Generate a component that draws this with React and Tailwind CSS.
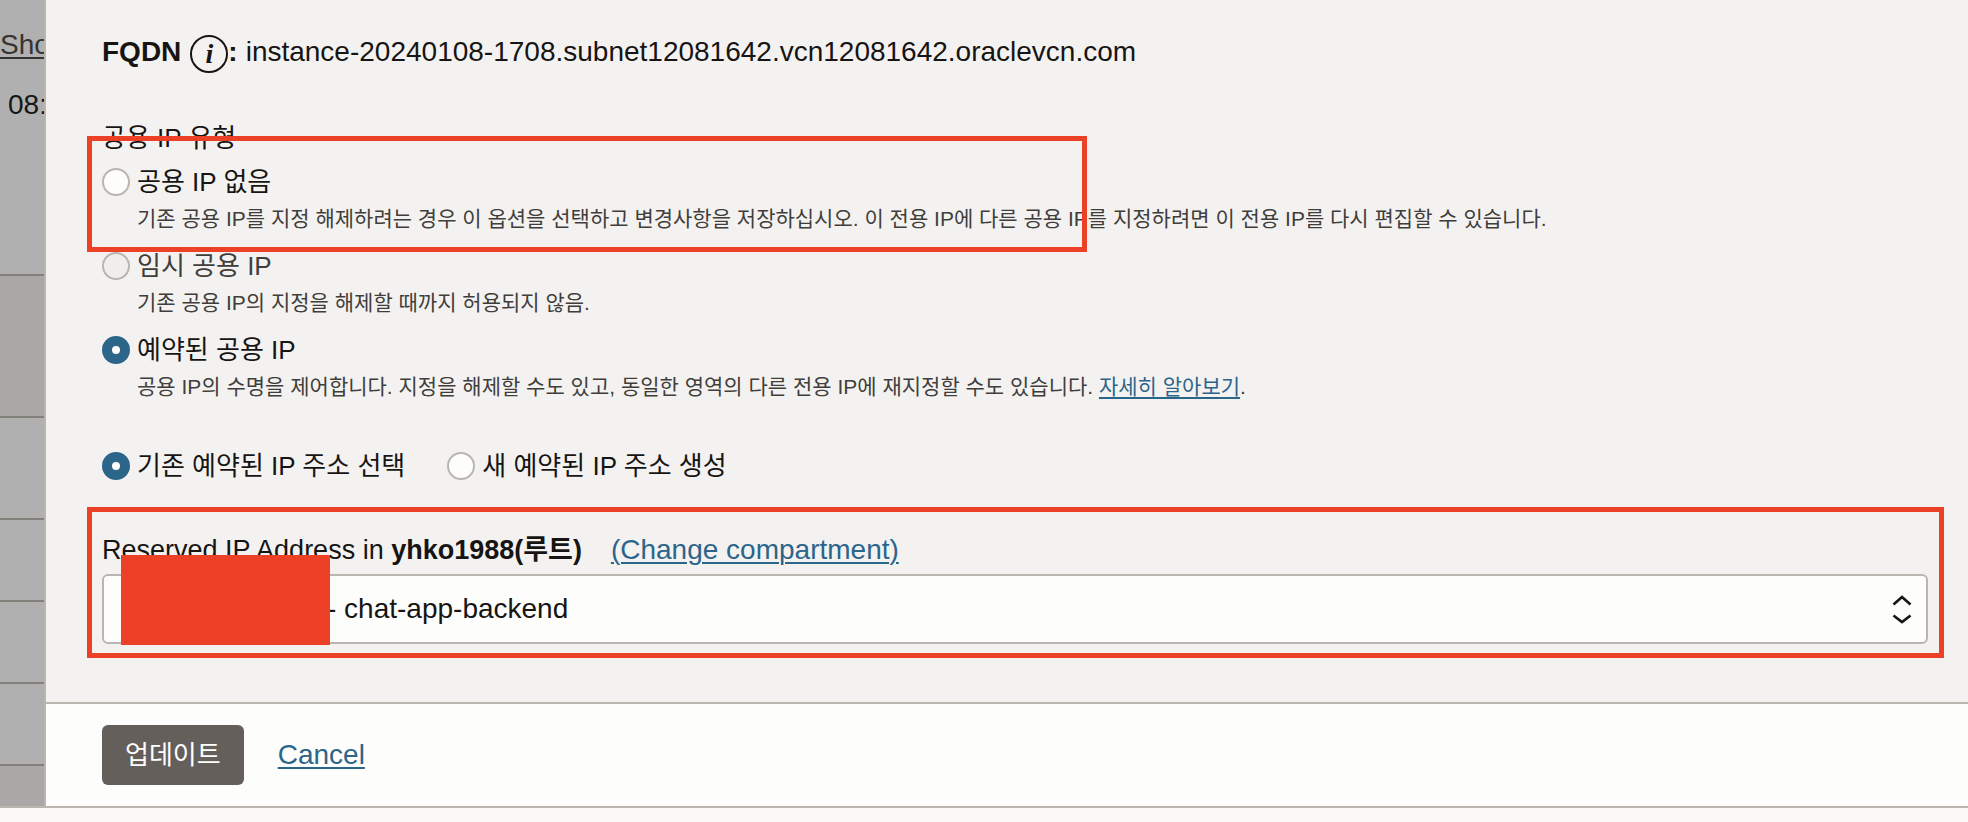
const OPTIONS = [
  {
    id: 'none',
    label: '공용 IP 없음',
    hint: '기존 공용 IP를 지정 해제하려는 경우 이 옵션을 선택하고 변경사항을 저장하십시오. 이 전용 IP에 다른 공용 IP를 지정하려면 이 전용 IP를 다시 편집할 수 있습니다.',
    highlighted: true,
  },
  {
    id: 'ephemeral',
    label: '임시 공용 IP',
    hint: '기존 공용 IP의 지정을 해제할 때까지 허용되지 않음.',
    disabled: true,
  },
  {
    id: 'reserved',
    label: '예약된 공용 IP',
    hint: '공용 IP의 수명을 제어합니다. 지정을 해제할 수도 있고, 동일한 영역의 다른 전용 IP에 재지정할 수도 있습니다. ',
    link: '자세히 알아보기',
    checked: true,
  },
];

function Radio(props) {
  return (
    <input
      type="radio"
      className="size-7 shrink-0 appearance-none rounded-full border-2 border-[#bbb5b0] bg-[#fdfdfc] checked:border-[10px] checked:border-[#2c658a] disabled:bg-[#f0eeec]"
      {...props}
    />
  );
}

function TypeOption({ option }) {
  return (
    <div className="relative">
      <div className="flex h-10 items-center gap-[7px]">
        <Radio
          id={option.id}
          name="ip-type"
          defaultChecked={option.checked}
          disabled={option.disabled}
          aria-describedby={`${option.id}-hint`}
        />
        <label htmlFor={option.id} className={option.disabled ? 'text-[#403e3b]' : ''}>
          {option.label}
        </label>
      </div>
      <p id={`${option.id}-hint`} className="ml-[35px] text-[21px] leading-[34px] text-[#403e3b]">
        {option.hint}
        {option.link && (
          <>
            <a href="#learn" className="text-[#2c658a] underline decoration-2 underline-offset-3">
              {option.link}
            </a>
            .
          </>
        )}
      </p>
      {option.highlighted && (
        <div className="pointer-events-none absolute -top-[26px] -bottom-4 -left-[15px] w-[1000px] border-[5px] border-[#ec4127]" />
      )}
    </div>
  );
}

function Backdrop() {
  return (
    <div className="flex w-[46px] shrink-0 flex-col overflow-hidden border-r-2 border-[#bbb5b0] bg-[#b0b0b0] text-[28px] leading-10 whitespace-nowrap">
      <div className="h-[276px] border-b-2 border-[#83807c] pt-[25px]">
        <a href="#show" className="block text-[#353432] underline decoration-2 underline-offset-3">
          Show
        </a>
        <p className="mt-5 pl-2">08:</p>
      </div>
      <div className="h-[142px] border-b-2 border-[#83807c] bg-[#a9a8a6]" />
      <div className="h-[102px] border-b-2 border-[#83807c]" />
      <div className="h-[82px] border-b-2 border-[#83807c]" />
      <div className="h-[82px] border-b-2 border-[#83807c]" />
      <div className="h-[82px] border-b-2 border-[#83807c]" />
      <div className="grow bg-[#a9a8a6]" />
    </div>
  );
}

export default function App() {
  return (
    <div className="min-h-screen bg-[#fbf9f8] font-['Liberation_Sans','Noto_Sans_CJK_KR',sans-serif] text-[#161513]">
      <div className="flex border-b-2 border-[#bbb5b0]">
        <Backdrop />
        <form className="min-w-0 grow bg-[#f4f2f1]" onSubmit={(e) => e.preventDefault()}>
          <div className="pt-[35px] pr-10 pb-[58px] pl-14 text-[26px] leading-10">
            <div className="flex items-start text-[28px] leading-[34px]">
              <b>FQDN</b>
              <button
                type="button"
                aria-label="FQDN info"
                className="ml-[9px] flex size-[38px] items-center justify-center rounded-full border-2 border-[#161513] font-['Liberation_Serif',serif] text-[28px] leading-8 font-bold italic"
              >
                i
              </button>
              <b>:</b>
              <span className="ml-2">instance-20240108-1708.subnet12081642.vcn12081642.oraclevcn.com</span>
            </div>

            <fieldset className="mt-[45px]">
              <legend className="mb-1">공용 IP 유형</legend>
              <div className="flex flex-col gap-[10px]">
                {OPTIONS.map((o) => (
                  <TypeOption key={o.id} option={o} />
                ))}
              </div>
            </fieldset>

            <div className="mt-[42px] flex items-center gap-[42px]">
              <div className="flex items-center gap-[7px]">
                <Radio id="existing" name="source" defaultChecked />
                <label htmlFor="existing">기존 예약된 IP 주소 선택</label>
              </div>
              <div className="flex items-center gap-[7px]">
                <Radio id="new" name="source" />
                <label htmlFor="new">새 예약된 IP 주소 생성</label>
              </div>
            </div>

            <div className="relative mt-11 text-[28px]">
              <div className="mb-1 flex h-10 items-center gap-[29px]">
                <label htmlFor="address" className="text-[27px]">
                  Reserved IP Address in <b>yhko1988(루트)</b>
                </label>
                <a href="#compartment" className="text-[#2c658a] underline decoration-2 underline-offset-3">
                  (Change compartment)
                </a>
              </div>
              <div className="relative">
                <select
                  id="address"
                  className="block h-[70px] w-full appearance-none rounded-md border-2 border-[#bbb5b0] bg-[#fdfdfc] pr-16 pl-[223px]"
                >
                  <option>- chat-app-backend</option>
                </select>
                <svg
                  viewBox="0 0 20 30"
                  className="pointer-events-none absolute top-5 right-4 h-[30px] w-5 fill-none stroke-[#161513] stroke-[2.6]"
                >
                  <path d="M1.500 10.500 10 3l8.500 7.500M1.500 21.500 10 28l8.500-6.500" />
                </svg>
                <div className="absolute -top-[19px] left-[19px] h-[90px] w-[209px] bg-[#ec4127]" />
              </div>
              <div className="pointer-events-none absolute -top-[23px] -right-4 -bottom-[14px] -left-[15px] border-[5px] border-[#ec4127]" />
            </div>
          </div>

          <div className="flex items-center gap-[34px] border-t-2 border-[#bbb5b0] bg-[#fdfdfc] pt-[21px] pb-[21px] pl-14">
            <button type="submit" className="h-[60px] rounded-md bg-[#655f5b] px-[23px] text-[26px] text-white">
              업데이트
            </button>
            <a href="#cancel" className="text-[28px] text-[#2c658a] underline decoration-2 underline-offset-3">
              Cancel
            </a>
          </div>
        </form>
      </div>
    </div>
  );
}
